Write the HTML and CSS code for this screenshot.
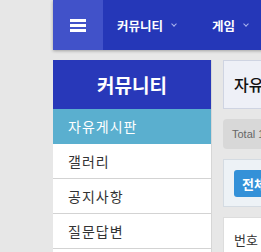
FILE: index.html
```html
<!DOCTYPE html>
<html lang="ko">
<head>
    <meta charset="UTF-8">
    <meta name="viewport" content="width=device-width, initial-scale=1.0">
    <title>커뮤니티 - 자유게시판</title>
    <link rel="stylesheet" href="styles.css">
</head>
<body>

    <div class="page">
        <header class="topbar">
            <div class="menu-btn">
                <span></span><span></span><span></span>
            </div>
            <nav class="nav">
                <a class="nav-item">커뮤니티 <i class="chev"></i></a>
                <a class="nav-item">게임 <i class="chev"></i></a>
            </nav>
        </header>

        <div class="content">
            <aside class="sidebar">
                <h2 class="side-title">커뮤니티</h2>
                <ul class="side-menu">
                    <li class="active">자유게시판</li>
                    <li>갤러리</li>
                    <li>공지사항</li>
                    <li>질문답변</li>
                </ul>
            </aside>

            <main class="board">
                <div class="board-head">자유게시판</div>
                <div class="total">Total 128</div>
                <div class="filter">
                    <button class="btn">전체</button>
                </div>
                <div class="table">
                    <span>번호</span>
                </div>
            </main>
        </div>
    </div>

</body>
</html>
```

FILE: styles.css
```css
body {
    margin: 0;
    background: #e7e7e7;
    font-family: "Noto Sans CJK KR", "Noto Sans", sans-serif;
    color: #333;
    overflow: hidden;
}
.page {
    padding-left: 53px;
    width: 600px;
}
.topbar {
    display: flex;
    height: 50px;
    background: #2537b8;
    box-shadow: 0 1px 3px rgba(0, 0, 0, 0.3);
}
.menu-btn {
    width: 50px;
    background: #4152c9;
    display: flex;
    flex-direction: column;
    justify-content: center;
    align-items: center;
    gap: 2px;
}
.menu-btn span {
    display: block;
    width: 16px;
    height: 3px;
    background: #fff;
}
.nav {
    display: flex;
}
.nav-item {
    display: flex;
    align-items: center;
    padding: 0 22px 0 14px;
    color: #fff;
    font-weight: bold;
    font-size: 12.5px;
}
.chev {
    width: 3px;
    height: 3px;
    border-right: 1px solid #aab4ee;
    border-bottom: 1px solid #aab4ee;
    transform: rotate(45deg);
    margin: 0 0 3px 9px;
}
.content {
    display: flex;
    gap: 11px;
    margin-top: 10px;
}
.sidebar {
    width: 159px;
    flex: none;
    background: #fff;
    border-right: 1px solid #d6d6d6;
    box-sizing: border-box;
}
.side-title {
    margin: 0;
    height: 49px;
    line-height: 49px;
    background: #2838b9;
    color: #fff;
    text-align: center;
    font-size: 19px;
}
.side-menu {
    list-style: none;
    margin: 0;
    padding: 0;
}
.side-menu li {
    height: 34px;
    line-height: 34px;
    padding-left: 15px;
    font-size: 14px;
    border-bottom: 1px solid #d3d3d3;
    color: #333;
    letter-spacing: 1px;
}
.side-menu li.active {
    background: #5aafcf;
    color: #fff;
    border-bottom: none;
    height: 35px;
    line-height: 35px;
}
.board {
    width: 300px;
}
.board-head {
    height: 47px;
    line-height: 47px;
    padding-left: 10px;
    background: #eef0f7;
    border: 1px solid #cfd4e2;
    font-size: 16px;
    font-weight: 500;
    color: #111;
}
.total {
    margin-top: 10px;
    height: 30px;
    line-height: 30px;
    padding-left: 9px;
    background: #d8d8d8;
    border-radius: 4px;
    font-family: "Liberation Sans", Arial, sans-serif;
    font-size: 11px;
    color: #666;
}
.filter {
    margin-top: 10px;
    padding: 10px;
    background: #edf2f6;
    border: 1px solid #d4dbe2;
    height: 26px;
}
.btn {
    height: 27px;
    padding: 0 8px;
    border: none;
    border-radius: 3px;
    background: #3491d8;
    color: #fff;
    font-weight: bold;
    font-size: 13px;
    font-family: inherit;
}
.table {
    margin-top: 10px;
    height: 60px;
    background: #fff;
    border: 1px solid #ddd;
    padding: 12px 0 0 10px;
    font-size: 13px;
}
```
